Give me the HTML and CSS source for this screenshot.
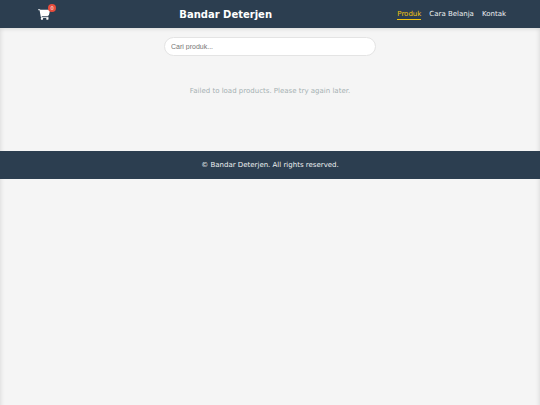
FILE: index.html
```html
<!DOCTYPE html>
<html lang="id">
<head>
  <meta charset="UTF-8">
  <meta name="viewport" content="width=device-width, initial-scale=1.0">
  <title>Bandar Deterjen</title>
  <link rel="stylesheet" href="styles.css">
</head>
<body>
  <header class="header">
    <button class="cart-button" type="button" aria-label="Keranjang">
      <svg class="cart-icon" viewBox="0 0 576 512" aria-hidden="true">
        <path d="M0 24C0 11 11 0 24 0h46c22 0 41 13 51 32h411c26 0 45 25 38 50l-41 190c-9 32-38 54-70 54H171l5 14c2 11 12 19 24 19h288c13 0 24 11 24 24s-11 24-24 24H200c-35 0-65-25-71-59L77 54c-1-3-4-6-7-6H24C11 48 0 37 0 24z"/>
        <circle cx="190" cy="456" r="56"/>
        <circle cx="450" cy="456" r="56"/>
      </svg>
      <span class="cart-count">0</span>
    </button>
    <h1 class="logo">Bandar Deterjen</h1>
    <nav class="nav">
      <a href="#produk" class="active">Produk</a>
      <a href="#cara-belanja">Cara Belanja</a>
      <a href="#kontak">Kontak</a>
    </nav>
  </header>

  <main class="content" id="produk">
    <input class="search" type="search" placeholder="Cari produk..." aria-label="Cari produk">
    <p class="message">Failed to load products. Please try again later.</p>
  </main>

  <footer class="footer">
    <p>&copy; Bandar Deterjen. All rights reserved.</p>
  </footer>
</body>
</html>
```
FILE: styles.css
```css
* {
  box-sizing: border-box;
  margin: 0;
  padding: 0;
}
body {
  min-height: 100vh;
  font-family: "DejaVu Sans", Verdana, sans-serif;
  font-size: 7px;
  line-height: 12px;
  color: #2c3e50;
  background-color: #f5f5f5;
  box-shadow: inset 5px 0 4px -4px rgba(0, 0, 0, 0.1), inset -5px 0 4px -4px rgba(0, 0, 0, 0.1);
}
.header {
  display: flex;
  justify-content: space-between;
  align-items: center;
  padding: 7px 34px 6px 37px;
  background-color: #2c3e50;
  color: white;
  box-shadow: 0 1px 4px rgba(0, 0, 0, 0.12);
}
.cart-button {
  position: relative;
  display: flex;
  padding: 0 4px 0 1px;
  border: none;
  background: none;
  color: white;
  cursor: pointer;
}
.cart-icon {
  width: 12px;
  height: 11px;
  fill: currentColor;
}
.cart-count {
  position: absolute;
  top: -5px;
  right: -2px;
  width: 8px;
  height: 8px;
  border-radius: 50%;
  background-color: #e74c3c;
  font-family: "DejaVu Sans", Verdana, sans-serif;
  font-size: 5px;
  line-height: 8px;
  text-align: center;
}
.logo {
  font-size: 10px;
  line-height: 15px;
}
.nav {
  display: flex;
  gap: 8px;
}
.nav a {
  padding-top: 1px;
  line-height: 9px;
  color: #ecf0f1;
  text-decoration: none;
  border-bottom: 1px solid transparent;
}
.nav a.active {
  color: #f1c40f;
  border-bottom-color: #f1c40f;
}
.content {
  padding: 9px 16px 54px;
  text-align: center;
}
.search {
  display: block;
  width: 100%;
  max-width: 212px;
  height: 19px;
  margin: 0 auto 29px;
  padding: 0 6px;
  border: 1px solid #e4e4e4;
  border-radius: 10px;
  background-color: white;
  font-family: "Liberation Sans", Arial, sans-serif;
  font-size: 7px;
  outline: none;
  appearance: none;
}
.search::placeholder {
  color: #757575;
}
.message {
  color: #a5b1b3;
}
.footer {
  padding: 8px;
  background-color: #2c3e50;
  color: #ecf0f1;
  text-align: center;
}
```
